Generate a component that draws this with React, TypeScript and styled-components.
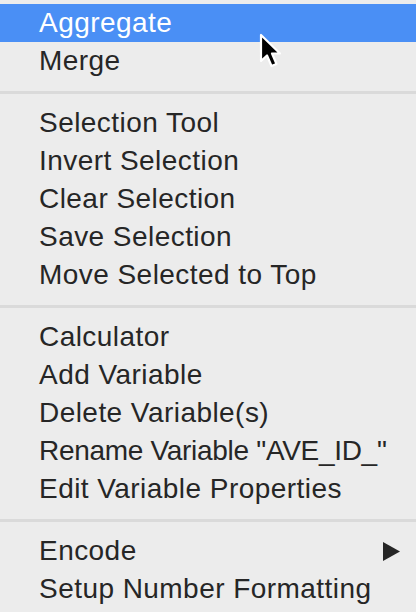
import React from "react";
import styled, { createGlobalStyle } from "styled-components";

const Global = createGlobalStyle`
  html, body {
    margin: 0;
    padding: 0;
    background: #ececec;
  }
  #root {
    width: 416px;
    height: 612px;
  }
`;

const Menu = styled.div`
  position: relative;
  width: 416px;
  height: 612px;
  box-sizing: border-box;
  padding: 4px 0;
  background: #ececec;
  display: flex;
  flex-direction: column;
  font-family: "Liberation Sans", Arial, sans-serif;
  font-size: 28px;
  overflow: hidden;
`;

const Item = styled.div<{ $active?: boolean; $tight?: boolean }>`
  height: 38px;
  flex: 0 0 38px;
  display: flex;
  align-items: center;
  justify-content: space-between;
  padding: 0 16px 0 39px;
  background: ${(p) => (p.$active ? "#4a8ff5" : "transparent")};
  color: ${(p) => (p.$active ? "#ffffff" : "#262626")};
  letter-spacing: ${(p) => (p.$tight ? "-0.3px" : "0.45px")};
  white-space: nowrap;
`;

const Separator = styled.div`
  flex: 0 0 24px;
  display: flex;
  align-items: center;
  &::after {
    content: "";
    display: block;
    width: 100%;
    height: 3px;
    background: #dadada;
  }
`;

const Cursor = styled.svg`
  position: absolute;
  left: 257px;
  top: 31px;
  width: 28px;
  height: 40px;
`;

const Arrow = () => (
  <svg width="17" height="19" viewBox="0 0 17 19">
    <polygon points="0,0 17,9.5 0,19" fill="#262626" />
  </svg>
);

type Entry =
  | { label: string; active?: boolean; submenu?: boolean; tight?: boolean }
  | "sep";

const entries: Entry[] = [
  { label: "Aggregate", active: true },
  { label: "Merge" },
  "sep",
  { label: "Selection Tool" },
  { label: "Invert Selection" },
  { label: "Clear Selection" },
  { label: "Save Selection" },
  { label: "Move Selected to Top" },
  "sep",
  { label: "Calculator" },
  { label: "Add Variable" },
  { label: "Delete Variable(s)" },
  { label: "Rename Variable \"AVE_ID_\"", tight: true },
  { label: "Edit Variable Properties" },
  "sep",
  { label: "Encode", submenu: true },
  { label: "Setup Number Formatting" },
];

export default function App() {
  return (
    <>
      <Global />
      <Menu>
        {entries.map((e, i) =>
          e === "sep" ? (
            <Separator key={i} />
          ) : (
            <Item key={i} $active={e.active} $tight={e.tight}>
              <span>{e.label}</span>
              {e.submenu && <Arrow />}
            </Item>
          )
        )}
        <Cursor viewBox="0 0 28 40">
          <path
            d="M4 4 L4 30 L10 24.5 L14.5 35 L19.5 33 L15 22.5 L23 22.5 Z"
            fill="#000"
            stroke="#fff"
            strokeWidth="2.2"
            strokeLinejoin="round"
          />
        </Cursor>
      </Menu>
    </>
  );
}
